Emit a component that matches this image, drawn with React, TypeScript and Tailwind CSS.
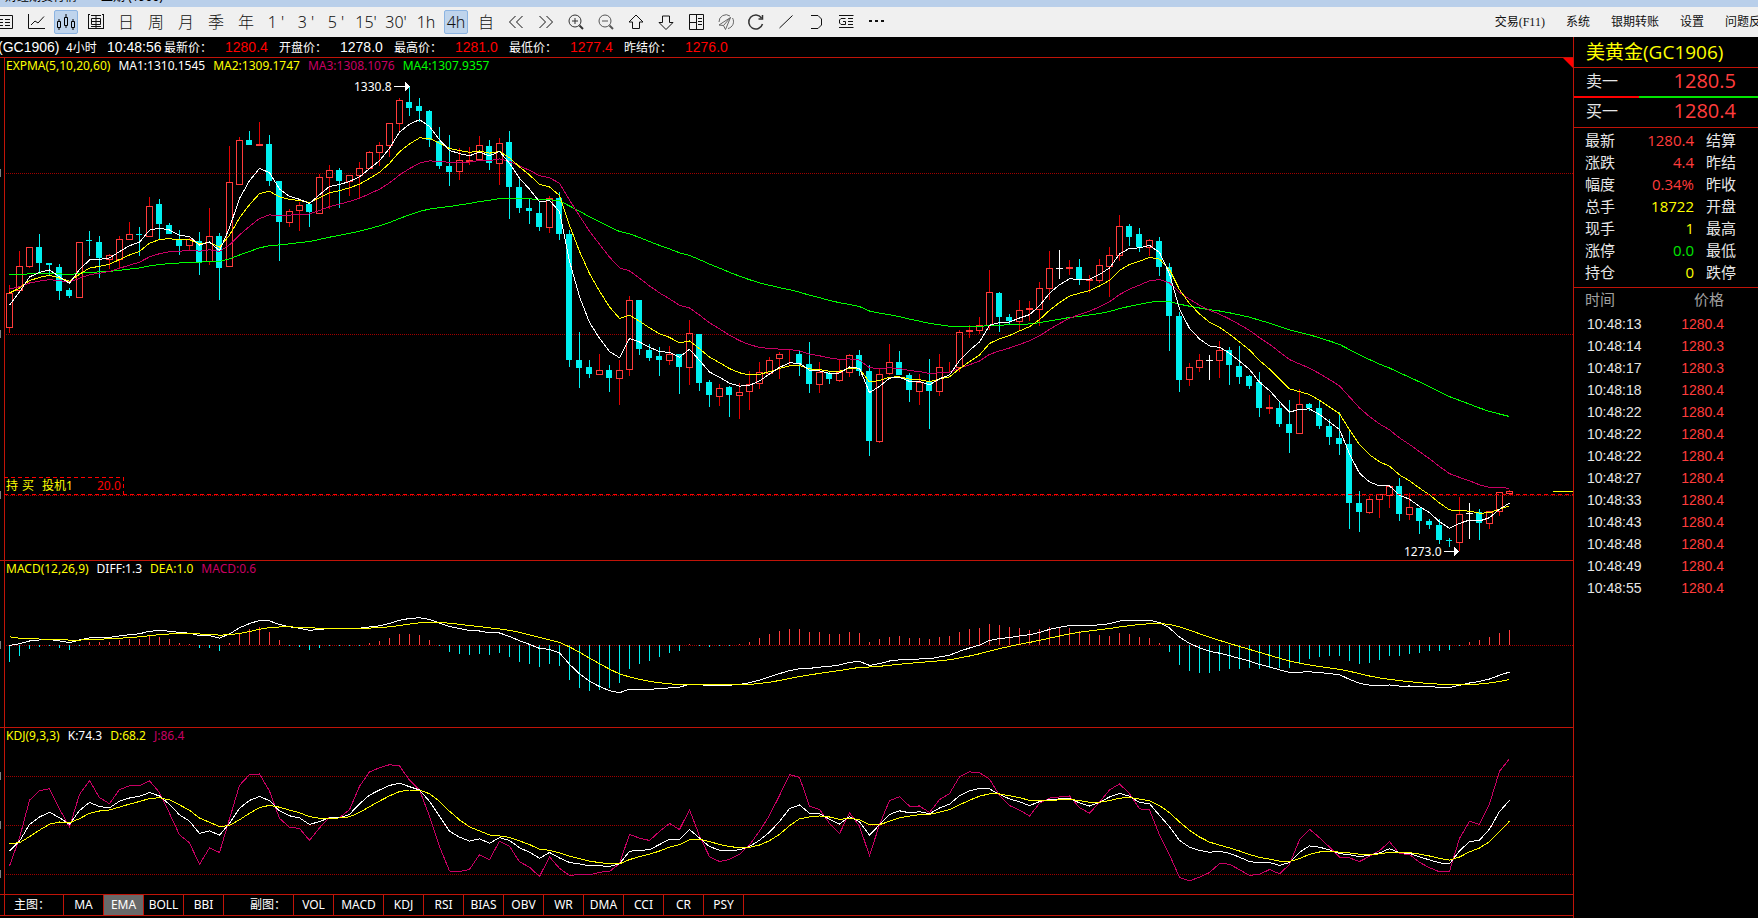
import type { ReactNode } from 'react';
import clsx from 'clsx';

type Kind = 'u' | 'd' | 'x';
// high, body top, body bottom, low (chart rows, larger = cheaper) and direction
type Candle = [number, number, number, number, Kind];

const candles: Candle[] = [
  [285, 293, 327, 333, 'u'], [251, 266, 290, 290, 'u'], [247, 247, 266, 268, 'u'], [234, 247, 263, 273, 'd'],
  [263, 263, 265, 275, 'd'], [264, 267, 291, 300, 'd'], [288, 290, 296, 298, 'd'], [242, 242, 297, 298, 'u'],
  [231, 240, 241, 256, 'd'], [236, 242, 258, 278, 'd'], [254, 255, 259, 269, 'u'], [236, 239, 259, 269, 'u'],
  [222, 234, 239, 239, 'u'], [227, 234, 235, 256, 'd'], [197, 206, 236, 236, 'u'], [199, 204, 224, 240, 'd'],
  [223, 225, 234, 234, 'd'], [230, 239, 246, 255, 'd'], [238, 239, 245, 250, 'u'], [232, 241, 262, 275, 'd'],
  [208, 236, 261, 265, 'u'], [233, 236, 268, 300, 'd'], [146, 182, 266, 266, 'u'], [137, 140, 184, 184, 'u'],
  [131, 140, 145, 145, 'd'], [122, 144, 145, 145, 'u'], [135, 144, 181, 186, 'd'], [181, 181, 222, 261, 'd'],
  [209, 211, 222, 227, 'u'], [202, 205, 210, 231, 'u'], [204, 204, 212, 227, 'd'], [174, 177, 213, 213, 'u'],
  [165, 170, 177, 209, 'u'], [168, 170, 181, 208, 'd'], [175, 175, 181, 196, 'u'], [162, 168, 175, 198, 'u'],
  [151, 152, 168, 168, 'u'], [142, 145, 152, 166, 'u'], [123, 123, 145, 157, 'u'], [98, 100, 123, 133, 'u'],
  [86, 102, 108, 116, 'd'], [98, 106, 111, 122, 'd'], [110, 111, 140, 147, 'd'], [127, 141, 166, 169, 'd'],
  [135, 166, 172, 186, 'd'], [148, 160, 171, 180, 'u'], [147, 160, 161, 165, 'u'], [136, 145, 159, 161, 'u'],
  [140, 146, 163, 170, 'd'], [138, 143, 163, 185, 'u'], [131, 142, 187, 219, 'd'], [179, 187, 208, 213, 'd'],
  [198, 208, 211, 224, 'd'], [202, 213, 227, 231, 'd'], [196, 198, 227, 233, 'u'], [192, 198, 234, 240, 'd'],
  [230, 234, 360, 367, 'd'], [332, 360, 368, 388, 'd'], [360, 367, 374, 378, 'd'], [354, 370, 374, 375, 'u'],
  [365, 370, 378, 392, 'd'], [360, 370, 378, 405, 'u'], [296, 300, 369, 376, 'u'], [300, 300, 349, 355, 'd'],
  [344, 350, 358, 361, 'd'], [347, 356, 360, 376, 'd'], [346, 354, 360, 365, 'u'], [354, 354, 367, 394, 'd'],
  [320, 333, 367, 385, 'u'], [334, 334, 383, 391, 'd'], [380, 382, 395, 407, 'd'], [384, 388, 396, 406, 'u'],
  [386, 387, 395, 417, 'd'], [383, 392, 395, 419, 'u'], [371, 384, 391, 410, 'u'], [362, 372, 383, 389, 'u'],
  [357, 360, 373, 373, 'u'], [352, 354, 358, 379, 'u'], [349, 354, 354, 366, 'u'], [350, 354, 364, 376, 'd'],
  [342, 364, 384, 393, 'd'], [362, 372, 384, 393, 'u'], [372, 373, 379, 384, 'd'], [360, 372, 380, 382, 'u'],
  [354, 355, 372, 377, 'u'], [350, 355, 371, 376, 'd'], [365, 371, 441, 456, 'd'], [368, 374, 441, 443, 'u'],
  [344, 362, 373, 375, 'u'], [351, 362, 375, 375, 'd'], [373, 375, 390, 402, 'd'], [374, 382, 391, 405, 'u'],
  [359, 382, 391, 429, 'd'], [354, 367, 391, 396, 'u'], [362, 367, 367, 372, 'u'], [330, 332, 367, 372, 'u'],
  [325, 330, 331, 338, 'u'], [317, 325, 330, 334, 'u'], [270, 292, 325, 330, 'u'], [292, 293, 317, 332, 'd'],
  [314, 317, 321, 324, 'd'], [300, 310, 321, 330, 'u'], [301, 308, 309, 321, 'u'], [282, 288, 309, 326, 'u'],
  [251, 268, 288, 300, 'u'], [250, 268, 268, 279, 'x'], [260, 267, 268, 275, 'u'], [259, 267, 280, 285, 'd'],
  [275, 279, 280, 293, 'u'], [259, 265, 280, 283, 'u'], [247, 255, 266, 297, 'u'], [215, 226, 255, 261, 'u'],
  [224, 226, 237, 246, 'd'], [228, 234, 247, 252, 'd'], [239, 240, 247, 256, 'u'], [237, 241, 267, 276, 'd'],
  [263, 267, 316, 351, 'd'], [312, 316, 380, 392, 'd'], [363, 367, 379, 386, 'u'], [354, 360, 367, 372, 'u'],
  [355, 360, 360, 380, 'x'], [341, 350, 360, 378, 'u'], [347, 350, 365, 385, 'd'], [346, 366, 377, 384, 'd'],
  [375, 376, 386, 389, 'd'], [372, 382, 408, 417, 'd'], [395, 407, 408, 414, 'u'], [402, 408, 424, 427, 'd'],
  [400, 424, 433, 453, 'd'], [389, 404, 433, 433, 'u'], [403, 404, 408, 411, 'd'], [400, 408, 426, 429, 'd'],
  [419, 426, 437, 445, 'd'], [412, 438, 444, 455, 'd'], [430, 444, 503, 529, 'd'], [491, 503, 512, 532, 'd'],
  [496, 499, 512, 514, 'u'], [494, 494, 499, 518, 'u'], [486, 486, 495, 508, 'u'], [478, 486, 514, 521, 'd'],
  [493, 507, 514, 520, 'u'], [508, 508, 521, 534, 'd'], [519, 521, 525, 529, 'd'], [519, 525, 540, 544, 'd'],
  [538, 540, 541, 547, 'd'], [497, 514, 542, 551, 'u'], [503, 513, 513, 539, 'x'], [509, 512, 523, 540, 'd'],
  [511, 511, 523, 529, 'u'], [492, 492, 511, 516, 'u'], [490, 491, 493, 495, 'u'],
];

const closes = candles.map(([, top, bottom, , kind]) => (kind === 'd' ? bottom : top));
const px = (i: number) => 9 + i * 10;

function ema(values: number[], period: number, seed: number) {
  const alpha = 2 / (period + 1);
  let prev = seed;
  return values.map((v, i) => (prev = i === 0 ? seed : prev + (v - prev) * alpha));
}

const points = (rows: number[]) => rows.map((y, i) => `${px(i) + 0.5},${y.toFixed(1)}`).join(' ');

const maLines = [
  { color: '#00ff00', rows: ema(closes, 60, 275) },
  { color: '#c80064', rows: ema(closes, 20, 289) },
  { color: '#ffff00', rows: ema(closes, 10, 293) },
  { color: '#ffffff', rows: ema(closes, 5, 305) },
];

// MACD
const MACD_ZERO = 645;
const MACD_SCALE = 0.9;
const fast = ema(closes, 12, 291);
const slow = ema(closes, 26, 291);
const diff = fast.map((v, i) => (slow[i] - v) * MACD_SCALE);
const dea = ema(diff, 9, 8.7);

const warmUp = [24, 54, 85, 74, 73, 47, 38, 93];
const kLine: number[] = [];
const dLine: number[] = [];
candles.forEach((_, i) => {
  const range = candles.slice(Math.max(0, i - 8), i + 1);
  const high = Math.min(...range.map((c) => c[0]));
  const low = Math.max(...range.map((c) => c[3]));
  const rsv = i < warmUp.length ? warmUp[i] : ((low - closes[i]) / (low - high)) * 100;
  kLine.push(i === 0 ? 24 : (kLine[i - 1] * 2 + rsv) / 3);
  dLine.push(i === 0 ? 31.6 : (dLine[i - 1] * 2 + kLine[i]) / 3);
});
const jLine = kLine.map((k, i) => 3 * k - 2 * dLine[i]);
const kdjRow = (v: number) => 825.5 - (v - 50) * 0.98;

function Grid({ rows, height, top }: { rows: number[]; height: number; top: number }) {
  return (
    <>
      <line x1="4.5" x2="4.5" y1={top} y2={top + height} stroke="#c01408" />
      {rows.map((y) => (
        <g key={y}>
          <line x1="6" x2="100%" y1={y + 0.5} y2={y + 0.5} stroke="#a00000" strokeDasharray="1 1" />
          <rect x="0" y={y - 4} width="1" height="8" fill="#808080" />
        </g>
      ))}
    </>
  );
}

function Line({ rows, color }: { rows: number[]; color: string }) {
  return <polyline points={points(rows)} fill="none" stroke={color} />;
}

function CandleMark({ candle, x }: { candle: Candle; x: number }) {
  const [high, top, bottom, low, kind] = candle;
  if (kind === 'd') {
    return (
      <g fill="#00f0f0">
        <rect x={x} y={high} width="1" height={low - high} />
        <rect x={x - 3} y={top} width="6" height={bottom - top} />
      </g>
    );
  }
  if (kind === 'x') {
    return (
      <g fill="#fff">
        <rect x={x} y={high} width="1" height={low - high} />
        <rect x={x - 3} y={top} width="7" height="1" />
      </g>
    );
  }
  return (
    <g>
      <rect x={x} y={high} width="1" height={top - high} fill="#e00000" />
      <rect x={x} y={bottom} width="1" height={low - bottom} fill="#e00000" />
      <rect x={x - 2.5} y={top + 0.5} width="6" height={bottom - top} fill="none" stroke="#ff3c3c" />
    </g>
  );
}

function Legend({ items }: { items: [string, string][] }) {
  return (
    <div className="absolute left-[6px] top-0 flex gap-2 text-[12px] leading-4 whitespace-nowrap">
      {items.map(([text, color]) => (
        <span key={text} className={color}>{text}</span>
      ))}
    </div>
  );
}

function PricePane() {
  return (
    <section className="relative border-t border-[#c01408]">
      <svg className="block h-[502px] w-full" shapeRendering="crispEdges">
        <g transform="translate(0,-58)">
          <Grid rows={[173, 334, 495]} top={58} height={502} />
          {candles.map((c, i) => (
            <CandleMark key={i} candle={c} x={px(i)} />
          ))}
          {maLines.map((l) => (
            <Line key={l.color} {...l} />
          ))}
          <line x1="4" x2="100%" y1="494.5" y2="494.5" stroke="#ff0000" strokeDasharray="4 3" />
          <path d="M4 477.5H123.5V494" fill="none" stroke="#ff0000" strokeDasharray="4 3" />
          <g fill="#fff" stroke="none">
            <path d="M394 86h11v-4l5 4.5l-5 4.5v-4h-11z" />
            <path d="M1444 551h10v-4l5 4.5l-5 4.5v-4h-10z" />
          </g>
          <g fill="#fff" fontSize="12">
            <text x="354" y="91">1330.8</text>
            <text x="1404" y="556">1273.0</text>
          </g>
          <g fontSize="12" fill="#ffff00">
            <text x="6" y="490">持</text>
            <text x="22" y="490">买</text>
            <text x="42" y="490">投机1</text>
            <text x="97" y="490" fill="#ff0000">20.0</text>
          </g>
        </g>
      </svg>
      <svg className="absolute right-0 top-0 h-[10px] w-[10px]">
        <path d="M0 0H10V10z" fill="#ff0000" />
      </svg>
      <div className="absolute right-0 top-[433px] h-px w-5 bg-[#ffff00]" />
      <Legend
        items={[
          ['EXPMA(5,10,20,60)', 'text-[#ffff00]'],
          ['MA1:1310.1545', 'text-white'],
          ['MA2:1309.1747', 'text-[#ffff00]'],
          ['MA3:1308.1076', 'text-[#c80064]'],
          ['MA4:1307.9357', 'text-[#00ff00]'],
        ]}
      />
    </section>
  );
}

function MacdPane() {
  return (
    <section className="relative border-t border-[#c01408]">
      <svg className="block h-[166px] w-full" shapeRendering="crispEdges">
        <g transform="translate(0,-561)">
          <Grid rows={[MACD_ZERO]} top={561} height={166} />
          {diff.map((v, i) => {
            const h = Math.round((v - dea[i]) * 2);
            return (
              <rect
                key={i}
                x={px(i)}
                y={h > 0 ? MACD_ZERO - h : MACD_ZERO}
                width="1"
                height={Math.max(1, Math.abs(h))}
                fill={h > 0 ? '#ff3c3c' : '#00f0f0'}
              />
            );
          })}
          <Line rows={diff.map((v) => MACD_ZERO + 0.5 - v)} color="#ffffff" />
          <Line rows={dea.map((v) => MACD_ZERO + 0.5 - v)} color="#ffff00" />
        </g>
      </svg>
      <Legend
        items={[
          ['MACD(12,26,9)', 'text-[#ffff00]'],
          ['DIFF:1.3', 'text-white'],
          ['DEA:1.0', 'text-[#ffff00]'],
          ['MACD:0.6', 'text-[#c80064]'],
        ]}
      />
    </section>
  );
}

function KdjPane() {
  return (
    <section className="relative border-t border-[#c01408]">
      <svg className="block h-[166px] w-full" shapeRendering="crispEdges">
        <g transform="translate(0,-728)">
          <Grid rows={[776, 825, 874]} top={728} height={166} />
          <Line rows={jLine.map(kdjRow)} color="#c80064" />
          <Line rows={kLine.map(kdjRow)} color="#ffffff" />
          <Line rows={dLine.map(kdjRow)} color="#ffff00" />
        </g>
      </svg>
      <Legend
        items={[
          ['KDJ(9,3,3)', 'text-[#ffff00]'],
          ['K:74.3', 'text-white'],
          ['D:68.2', 'text-[#ffff00]'],
          ['J:86.4', 'text-[#c80064]'],
        ]}
      />
    </section>
  );
}

function Icon({ children, color = '#111' }: { children: ReactNode; color?: string }) {
  return (
    <svg width="18" height="18" viewBox="0 0 18 18" fill="none" stroke={color} strokeWidth="1">
      {children}
    </svg>
  );
}

const tools: { label: string; node: ReactNode; active?: boolean }[] = [
  { label: '报价', node: <Icon><path d="M0 2.5H15.5V15.5H0M3 6.5h3M3 9.5h3M3 12.5h3M8 6.5h5M8 9.5h5M8 12.5h5" /></Icon> },
  { label: '分时图', node: <Icon><path d="M1.5 1V15.5H18M4 12L8 8L11 10L17 3.5" /></Icon> },
  { label: 'K线图', active: true, node: <Icon color="#000"><path d="M.5 8.500h3v6h-3zM2 6v2M2 15v2M7.500 4.500h3v8h-3zM9 1v3M9 13v2M14.500 8.500h3v6h-3zM16 6v2M16 15v2" /></Icon> },
  { label: '闪电图', node: <Icon><path d="M1.5 1V16M1 1.5h2M1 15.5h2M16.5 1V16M15 1.5h2M15 15.5h2M4 2.5h10M4.5 5.5h9v6h-9zM4.5 8.5h9M9 2v13M4 13.5h10M3 15.5h12" /></Icon> },
  { label: '日线', node: '日' },
  { label: '周线', node: '周' },
  { label: '月线', node: '月' },
  { label: '季线', node: '季' },
  { label: '年线', node: '年' },
  { label: '1分钟', node: "1 '" },
  { label: '3分钟', node: "3 '" },
  { label: '5分钟', node: "5 '" },
  { label: '15分钟', node: "15'" },
  { label: '30分钟', node: "30'" },
  { label: '1小时', node: '1h' },
  { label: '4小时', node: '4h', active: true },
  { label: '自定义周期', node: '自' },
  { label: '向左', node: <Icon><path d="M8.5 3L2.5 9L8.5 15M15.5 3L9.5 9L15.5 15" /></Icon> },
  { label: '向右', node: <Icon><path d="M2.5 3L8.5 9L2.5 15M9.5 3L15.5 9L9.5 15" /></Icon> },
  { label: '放大', node: <Icon color="#333"><circle cx="8" cy="8" r="6" /><path d="M5 8h6M8 5v6" /><path d="M12.5 12.5L16 16" strokeWidth="2" /></Icon> },
  { label: '缩小', node: <Icon color="#555"><circle cx="8" cy="8" r="6" /><path d="M5 8h6" /><path d="M12.5 12.5L16 16" strokeWidth="2" /></Icon> },
  { label: '上移', node: <Icon><path d="M9 2L16 9H12.5V15.5H5.5V9H2z" /></Icon> },
  { label: '下移', node: <Icon><path d="M9 16.5L16 9.5H12.5V3H5.5V9.5H2z" /></Icon> },
  { label: '布局', node: <Icon><path d="M2.5 1.5h14v15h-14zM9.5 1.5v15M2.5 9.5h7M11 5.5h4M11 8.5h4M11 11.5h4" /></Icon> },
  { label: '画线', node: <Icon color="#666"><path d="M2 9A7 7 0 0 1 13 3M15.500 5A7 7 0 0 1 11 15.500M13.500 4.500L2 12L6.500 12.500L8.500 16.500zM13.500 4.500L6.500 12.500" /></Icon> },
  { label: '刷新', node: <Icon color="#333"><path d="M14.5 5A7 7 0 1 0 15.5 11" strokeWidth="1.5" /><path d="M15.5 2V6H11.5" strokeWidth="1.5" /></Icon> },
  { label: '直线', node: <Icon><path d="M2.5 15L15.5 2.5" /></Icon> },
  { label: '圆弧', node: <Icon><path d="M4 2.5H11L14.5 6V12L11 15.5H4" /></Icon> },
  { label: '公式', node: <Icon><path d="M2 2.5H16.5M11 5.5h5M11 8.5h5M11 11.5h5M2 14.5H16.5M8.5 5.5H4L2.5 7V10L4 11.5H8.5V8.5H6" /></Icon> },
  { label: '更多', node: <Icon><path d="M2 8h3M8 8h3M14 8h3" strokeWidth="2" /></Icon> },
];

function Toolbar() {
  return (
    <header className="flex h-[30px] items-center justify-between overflow-hidden bg-[#f0f0f0] text-[#111]">
      <div className="-ml-[9px] flex">
        {tools.map((t) => (
          <div key={t.label} className="flex w-[30px] shrink-0 justify-center">
            <button
              aria-label={t.label}
              className={clsx(
                "flex h-6 w-6 items-center justify-center whitespace-nowrap rounded-[2px] border font-['Noto_Sans','Noto_Sans_CJK_SC',sans-serif] text-[16px] font-light leading-none",
                t.active ? 'border-[#8cb4e2] bg-[#bfd4ec]' : 'border-transparent',
              )}
            >
              {t.node}
            </button>
          </div>
        ))}
      </div>
      <nav className="-mr-[15px] flex shrink-0 gap-[21px] font-['Liberation_Serif','Noto_Sans_CJK_SC',serif] text-[12px]">
        {['交易(F11)', '系统', '银期转账', '设置', '问题反馈'].map((m) => (
          <a key={m} href="#">{m}</a>
        ))}
      </nav>
    </header>
  );
}

const summary: [string, string, string][] = [
  ['最新价', '1280.4', 'text-[#ff0000]'],
  ['开盘价', '1278.0', 'text-white'],
  ['最高价', '1281.0', 'text-[#ff0000]'],
  ['最低价', '1277.4', 'text-[#ff0000]'],
  ['昨结价', '1276.0', 'text-[#ff0000]'],
];

function SummaryRow() {
  return (
    <div className="flex h-5 items-center overflow-hidden whitespace-nowrap pt-px font-['Liberation_Sans','Noto_Sans_CJK_SC',sans-serif] text-[14px] text-white">
      <span className="-ml-[2px] w-[68px]">(GC1906)</span>
      <span className="w-[41px] text-[12px]">4小时</span>
      <span className="w-[57px]">10:48:56</span>
      {summary.map(([label, value, color]) => (
        <div key={label} className="flex w-[115px] items-center">
          <span className="w-[61px] text-[12px]">{label}：</span>
          <span className={color}>{value}</span>
        </div>
      ))}
    </div>
  );
}

function IndicatorTab({ name }: { name: string }) {
  return (
    <button
      className={clsx(
        'shrink-0 border-r border-[#c01408]',
        name === 'MACD' ? 'w-[50px]' : 'w-[40px]',
        name === 'EMA' && 'bg-[#696969]',
      )}
    >
      {name}
    </button>
  );
}

function IndicatorBar() {
  return (
    <footer className="flex h-[22px] border-y border-[#c01408] text-[12px] text-white">
      <div className="ml-1 w-[60px] shrink-0 border-x border-[#c01408] pl-[9px] leading-5">主图：</div>
      {['MA', 'EMA', 'BOLL', 'BBI'].map((n) => (
        <IndicatorTab key={n} name={n} />
      ))}
      <div className="w-[70px] shrink-0 border-r border-[#c01408] pl-[26px] leading-5">副图：</div>
      {['VOL', 'MACD', 'KDJ', 'RSI', 'BIAS', 'OBV', 'WR', 'DMA', 'CCI', 'CR', 'PSY'].map((n) => (
        <IndicatorTab key={n} name={n} />
      ))}
    </footer>
  );
}

const quotes: [string, string, string, string][] = [
  ['最新', '1280.4', 'text-[#ff3c3c]', '结算'],
  ['涨跌', '4.4', 'text-[#ff3c3c]', '昨结'],
  ['幅度', '0.34%', 'text-[#ff3c3c]', '昨收'],
  ['总手', '18722', 'text-[#ffff00]', '开盘'],
  ['现手', '1', 'text-[#ffff00]', '最高'],
  ['涨停', '0.0', 'text-[#00e600]', '最低'],
  ['持仓', '0', 'text-[#ffff00]', '跌停'],
];

const ticks: [string, string][] = [
  ['10:48:13', '1280.4'],
  ['10:48:14', '1280.3'],
  ['10:48:17', '1280.3'],
  ['10:48:18', '1280.4'],
  ['10:48:22', '1280.4'],
  ['10:48:22', '1280.4'],
  ['10:48:22', '1280.4'],
  ['10:48:27', '1280.4'],
  ['10:48:33', '1280.4'],
  ['10:48:43', '1280.4'],
  ['10:48:48', '1280.4'],
  ['10:48:49', '1280.4'],
  ['10:48:55', '1280.4'],
];

function QuotePanel() {
  return (
    <aside className="w-[185px] shrink-0 border-l border-[#c01408] font-['Open_Sans','Noto_Sans_CJK_SC',sans-serif] text-[#e6e6e6]">
      <h1 className="h-[31px] border-b border-[#c01408] pl-3 text-[19px] leading-[30px] text-[#ffff00]">美黄金(GC1906)</h1>
      <div className="flex h-7 items-center justify-between pb-[2px] pl-3 pr-[22px]">
        <span className="text-[16px]">卖一</span>
        <span className="text-[20px] leading-6 text-[#ff3c3c]">1280.5</span>
      </div>
      <div className="flex h-[2px]">
        <div className="w-[65px] bg-[#ff0000]" />
        <div className="flex-1 bg-[#00e600]" />
      </div>
      <div className="flex h-[30px] items-center justify-between border-b border-[#c01408] pb-1 pl-3 pr-[22px]">
        <span className="text-[16px]">买一</span>
        <span className="text-[20px] leading-6 text-[#ff3c3c]">1280.4</span>
      </div>
      <div className="h-[160px] border-b border-[#c01408] pt-px">
        <table className="w-full table-fixed text-[15px] leading-[22px]">
          <tbody>
            {quotes.map(([label, value, color, other]) => (
              <tr key={label} className="h-[22px]">
                <th className="w-[45px] p-0 pl-[11px] text-left font-normal whitespace-nowrap">{label}</th>
                <td className={clsx('w-[75px] p-0 text-right', color)}>{value}</td>
                <td className="p-0 pl-3">{other}</td>
              </tr>
            ))}
          </tbody>
        </table>
      </div>
      <table className="mt-px w-full table-fixed font-['Liberation_Sans','Noto_Sans_CJK_SC',sans-serif] text-[14px] leading-[22px]">
        <thead>
          <tr className="h-6 align-top text-[15px] text-[#a0a0a0]">
            <th className="w-[90px] p-0 pl-[11px] text-left font-normal">时间</th>
            <th className="p-0 pr-[34px] text-right font-normal">价格</th>
          </tr>
        </thead>
        <tbody>
          {ticks.map(([time, price], i) => (
            <tr key={i} className="h-[22px]">
              <td className="p-0 pl-[13px]">{time}</td>
              <td className="p-0 pr-[34px] text-right text-[#ff3c3c]">{price}</td>
            </tr>
          ))}
        </tbody>
      </table>
    </aside>
  );
}

export default function App() {
  return (
    <div className="flex min-h-screen flex-col overflow-hidden bg-black font-['Noto_Sans','Noto_Sans_CJK_SC',sans-serif]">
      {/* lower edge of the window title */}
      <div className="flex h-[7px] items-start gap-6 overflow-hidden bg-[#b9cfea] pl-[5px] text-[12px] leading-3 whitespace-nowrap text-black">
        <span className="-mt-[9px]">财经期货行情</span>
        <span className="-mt-[9px]">上期 (1906)</span>
      </div>
      <Toolbar />
      <div className="flex flex-1">
        <main className="min-w-0 flex-1">
          <SummaryRow />
          <PricePane />
          <MacdPane />
          <KdjPane />
          <IndicatorBar />
        </main>
        <QuotePanel />
      </div>
    </div>
  );
}
